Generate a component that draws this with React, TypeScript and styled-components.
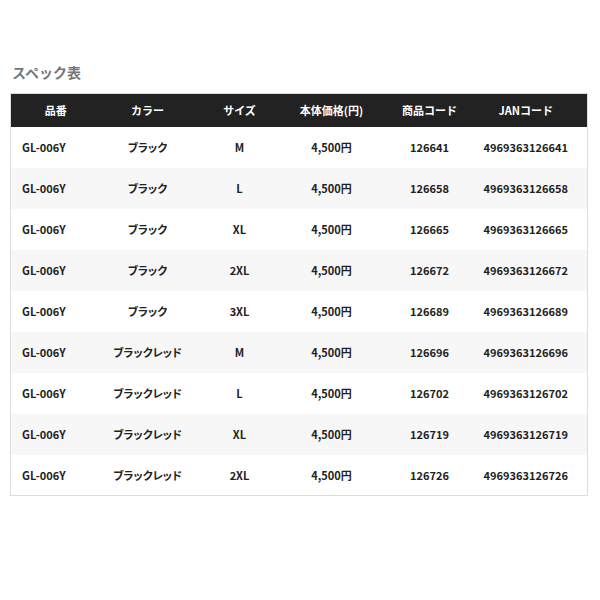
import * as React from 'react';
import styled, {createGlobalStyle} from 'styled-components';

const GlobalStyle = createGlobalStyle`
    html, body {
        margin: 0;
        padding: 0;
        background: #fff;
    }
    body {
        font-family: "Noto Sans CJK JP", "Noto Sans", sans-serif;
        color: #222;
    }
`;

const Page = styled.div`
    width: 600px;
    height: 600px;
    padding: 62px 13px 0 10px;
    box-sizing: border-box;
`;

const Title = styled.h2`
    margin: 0 0 10px 2px;
    font-size: 14px;
    line-height: 21px;
    font-weight: 700;
    color: #777;
`;

const Table = styled.table`
    width: 577px;
    border-collapse: collapse;
    border: 1px solid #ddd;
    table-layout: fixed;
`;

const HeadCell = styled.th<{$w: number; $last?: boolean}>`
    box-sizing: border-box;
    width: ${p => p.$w}px;
    height: 33px;
    padding: 0 ${p => (p.$last ? '16px' : '0')} 0 0;
    background: #222;
    color: #fff;
    font-size: 11px;
    font-weight: 700;
    text-align: center;
`;

const Row = styled.tr<{$even: boolean}>`
    background: ${p => (p.$even ? '#f7f7f7' : '#fff')};
`;

const Cell = styled.td<{$left?: boolean; $last?: boolean}>`
    box-sizing: border-box;
    height: 41px;
    padding: 0 ${p => (p.$last ? '16px' : '0')} 0 ${p => (p.$left ? '11px' : '0')};
    font-size: 11px;
    font-weight: 700;
    font-feature-settings: "palt";
    text-align: ${p => (p.$left ? 'left' : 'center')};
`;

const columns = [
    {label: '品番', w: 90},
    {label: 'カラー', w: 94},
    {label: 'サイズ', w: 90},
    {label: '本体価格(円)', w: 94},
    {label: '商品コード', w: 102},
    {label: 'JANコード', w: 107},
];

const rows = [
    ['ブラック', 'M', '126641'],
    ['ブラック', 'L', '126658'],
    ['ブラック', 'XL', '126665'],
    ['ブラック', '2XL', '126672'],
    ['ブラック', '3XL', '126689'],
    ['ブラックレッド', 'M', '126696'],
    ['ブラックレッド', 'L', '126702'],
    ['ブラックレッド', 'XL', '126719'],
    ['ブラックレッド', '2XL', '126726'],
];

export default function App() {
    return (
        <Page>
            <GlobalStyle />
            <Title>スペック表</Title>
            <Table>
                <thead>
                    <tr>
                        {columns.map((c, i) => (
                            <HeadCell key={c.label} $w={c.w} $last={i === columns.length - 1}>
                                {c.label}
                            </HeadCell>
                        ))}
                    </tr>
                </thead>
                <tbody>
                    {rows.map(([color, size, code], i) => (
                        <Row key={code} $even={i % 2 === 1}>
                            <Cell $left>GL-006Y</Cell>
                            <Cell>{color}</Cell>
                            <Cell>{size}</Cell>
                            <Cell>4,500円</Cell>
                            <Cell>{code}</Cell>
                            <Cell $last>4969363{code}</Cell>
                        </Row>
                    ))}
                </tbody>
            </Table>
        </Page>
    );
}
